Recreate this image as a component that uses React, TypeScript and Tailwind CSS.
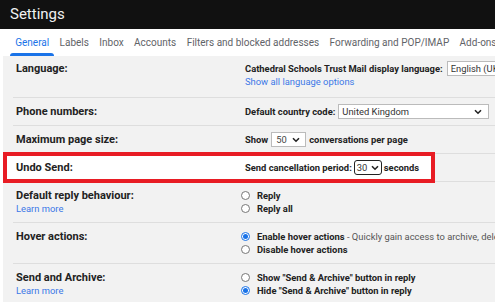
import React from 'react';

const Chevron = () => (
    <svg width="8" height="6" viewBox="0 0 8 6" className="shrink-0">
        <path d="M1 1.2 L4 4.2 L7 1.2" fill="none" stroke="#222" strokeWidth="1.6" />
    </svg>
);

const Radio = ({ checked }: { checked?: boolean }) =>
    checked ? (
        <span className="w-[9px] h-[9px] rounded-full border border-[#1a73e8] bg-white flex items-center justify-center shrink-0 -ml-[4px] mr-[7px]">
            <span className="w-[5px] h-[5px] rounded-full bg-[#1a73e8]" />
        </span>
    ) : (
        <span className="w-[9px] h-[9px] rounded-full border border-[#777] bg-white shrink-0 -ml-[4px] mr-[7px]" />
    );

const Row: React.FC<{ label: string; learn?: boolean; first?: boolean; highlight?: boolean; children: React.ReactNode }> = ({ label, learn, first, highlight, children }) => (
    <div className={`relative flex ${first ? 'pt-[5.5px] pb-[9.5px]' : 'pt-[7px] pb-[7px] border-t border-[#dedede]'}`}>
        {/* white fill inside the red annotation box */}
        {highlight && <div className="absolute -left-[6px] w-[424px] top-0 bottom-0 bg-white" />}
        <div className="relative w-[232px] pl-[3px] shrink-0">
            <div className="font-bold text-[11px] text-[#222]">{label}</div>
            {learn && <div className="text-[9.4px] text-[#3b78e7]">Learn more</div>}
        </div>
        <div className="relative flex flex-col text-[9.4px]">{children}</div>
    </div>
);

const App: React.FC = () => {
    const tabs = ['General', 'Labels', 'Inbox', 'Accounts', 'Filters and blocked addresses', 'Forwarding and POP/IMAP', 'Add-ons'];

    return (
        <div className="relative w-[495px] h-[302px] overflow-hidden bg-white whitespace-nowrap" style={{ fontFamily: 'Roboto, "Liberation Sans", sans-serif' }}>
            {/* Header */}
            <div className="h-[29px] bg-[#111] flex items-center pl-[10px] text-[15px] text-[#f1f1f1]">Settings</div>

            {/* Tabs */}
            <div className="h-[27px] bg-white flex pl-[10px] text-[10px]">
                {tabs.map((t, i) => (
                    <div key={t} className={`relative flex items-center px-[5.2px] ${i === 0 ? 'text-[#1a73e8]' : 'text-[#5f6368]'}`}>
                        {t}
                        {i === 0 && <span className="absolute left-0 right-0 bottom-0 h-[3px] rounded-t-[3px] bg-[#1a73e8]" />}
                    </div>
                ))}
            </div>

            {/* Settings rows */}
            <div className="ml-[3px] bg-[#f2f2f2] h-full">
                <div className="ml-[10px] leading-[13px] text-[#222]">
                    <Row label="Language:" first>
                        <div className="flex items-center font-bold">
                            Cathedral Schools Trust Mail display language:
                            <span className="ml-[4px] -my-[1px] h-[15px] px-[3px] border border-[#bbb] bg-white font-normal text-[#333] flex items-center">English (UK)</span>
                        </div>
                        <div className="text-[#3b78e7]">Show all language options</div>
                    </Row>
                    <Row label="Phone numbers:">
                        <div className="flex items-center font-bold">
                            Default country code:
                            <span className="ml-[3px] -my-[1px] w-[151px] h-[15px] pl-[3px] pr-[6px] border border-[#bbb] bg-white font-normal text-[#333] flex items-center justify-between">
                                United Kingdom
                                <Chevron />
                            </span>
                        </div>
                    </Row>
                    <Row label="Maximum page size:">
                        <div className="flex items-center font-bold">
                            Show
                            <span className="mx-[3px] -my-[1px] w-[35px] h-[15px] pl-[4px] pr-[5px] border border-[#bbb] bg-white font-normal text-[#444] flex items-center justify-between">
                                50
                                <Chevron />
                            </span>
                            conversations per page
                        </div>
                    </Row>
                    <Row label="Undo Send:" highlight>
                        <div className="flex items-center font-bold">
                            Send cancellation period:
                            <span className="mx-[2px] -my-[1px] w-[28px] h-[15px] pl-[2px] pr-[2px] border-[1.5px] border-[#222] rounded-[3px] bg-white font-normal text-[#333] flex items-center justify-between">
                                30
                                <Chevron />
                            </span>
                            seconds
                        </div>
                    </Row>
                    <Row label="Default reply behaviour:" learn>
                        <div className="flex items-center font-bold"><Radio />Reply</div>
                        <div className="flex items-center font-bold"><Radio />Reply all</div>
                    </Row>
                    <Row label="Hover actions:">
                        <div className="flex items-center">
                            <Radio checked />
                            <span className="font-bold">Enable hover actions</span>
                            <span className="text-[#555]">&nbsp;- Quickly gain access to archive, delete, mark as read and snooze controls on hover.</span>
                        </div>
                        <div className="flex items-center font-bold"><Radio />Disable hover actions</div>
                    </Row>
                    <Row label="Send and Archive:" learn>
                        <div className="flex items-center font-bold"><Radio />Show "Send &amp; Archive" button in reply</div>
                        <div className="flex items-center font-bold"><Radio checked />Hide "Send &amp; Archive" button in reply</div>
                    </Row>
                </div>
            </div>

            {/* Annotation box around Undo Send */}
            <div className="absolute left-[3px] top-[152px] w-[432px] h-[31px] border-[4px] border-[#e81c24] pointer-events-none" />
        </div>
    );
};

export default App;
